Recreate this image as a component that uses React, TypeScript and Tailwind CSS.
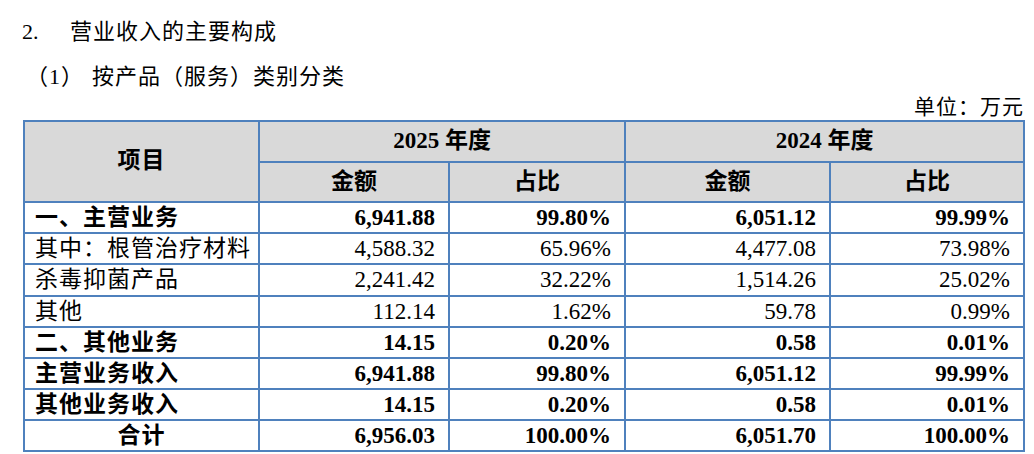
const rows = [
  { name: '一、主营业务', a: '6,941.88', b: '99.80%', c: '6,051.12', d: '99.99%', bold: true, h: 'h-[31px]' },
  { name: '其中：根管治疗材料', a: '4,588.32', b: '65.96%', c: '4,477.08', d: '73.98%', h: 'h-[31px]' },
  { name: '杀毒抑菌产品', a: '2,241.42', b: '32.22%', c: '1,514.26', d: '25.02%', h: 'h-[32px]' },
  { name: '其他', a: '112.14', b: '1.62%', c: '59.78', d: '0.99%', h: 'h-[31px]' },
  { name: '二、其他业务', a: '14.15', b: '0.20%', c: '0.58', d: '0.01%', bold: true, h: 'h-[31px]' },
  { name: '主营业务收入', a: '6,941.88', b: '99.80%', c: '6,051.12', d: '99.99%', bold: true, h: 'h-[31px]' },
  { name: '其他业务收入', a: '14.15', b: '0.20%', c: '0.58', d: '0.01%', bold: true, h: 'h-[31px]' },
  { name: '合计', a: '6,956.03', b: '100.00%', c: '6,051.70', d: '100.00%', bold: true, center: true, h: 'h-[31px]' },
];

const font = { fontFamily: '"Liberation Serif", "Noto Sans CJK SC", serif' };

export default function App() {
  return (
    <div className="w-[1034px] h-[454px] bg-white text-black overflow-hidden" style={font}>
      <div className="pl-[22px] pt-[18px] h-[62px] flex items-start text-[22px] leading-[28px]">
        <span className="w-[48px]">2.</span>
        <span className="tracking-[1px]">营业收入的主要构成</span>
      </div>
      <div className="pl-[26px] h-[30px] flex items-center text-[22px] leading-[28px]">
        <span className="w-[66px] tracking-[1px]">（1）</span>
        <span className="tracking-[1px]">按产品（服务）类别分类</span>
      </div>
      <div className="h-[28px] pr-[10px] pt-[2px] flex items-center justify-end text-[21px] tracking-[1px] leading-[26px]">
        单位：万元
      </div>
      <table className="ml-[23px] w-[1000px] table-fixed border-collapse text-[23px]">
        <colgroup>
          <col className="w-[235px]" />
          <col className="w-[190px]" />
          <col className="w-[176px]" />
          <col className="w-[205px]" />
          <col className="w-[194px]" />
        </colgroup>
        <thead>
          <tr className="h-[41px] bg-[#d9d9d9] font-bold">
            <th rowSpan={2} className="border-2 border-[#4f81bd] text-center tracking-[1px]">项目</th>
            <th colSpan={2} className="border-2 border-[#4f81bd] text-center">2025 年度</th>
            <th colSpan={2} className="border-2 border-[#4f81bd] text-center">2024 年度</th>
          </tr>
          <tr className="h-[40px] bg-[#d9d9d9] font-bold">
            <th className="border-2 border-[#4f81bd] text-center">金额</th>
            <th className="border-2 border-[#4f81bd] text-center">占比</th>
            <th className="border-2 border-[#4f81bd] text-center">金额</th>
            <th className="border-2 border-[#4f81bd] text-center">占比</th>
          </tr>
        </thead>
        <tbody>
          {rows.map((r, i) => (
            <tr key={i} className={`${r.h} leading-[26px] ${r.bold ? 'font-bold' : 'font-normal'}`}>
              <td
                className={`border-2 border-[#4f81bd] tracking-[1px] whitespace-nowrap ${r.center ? 'text-center' : 'pl-[10px] text-left'}`}
              >
                {r.name}
              </td>
              <td className="border-2 border-[#4f81bd] text-right pr-[13px]">{r.a}</td>
              <td className="border-2 border-[#4f81bd] text-right pr-[13px]">{r.b}</td>
              <td className="border-2 border-[#4f81bd] text-right pr-[13px]">{r.c}</td>
              <td className="border-2 border-[#4f81bd] text-right pr-[13px]">{r.d}</td>
            </tr>
          ))}
        </tbody>
      </table>
    </div>
  );
}
